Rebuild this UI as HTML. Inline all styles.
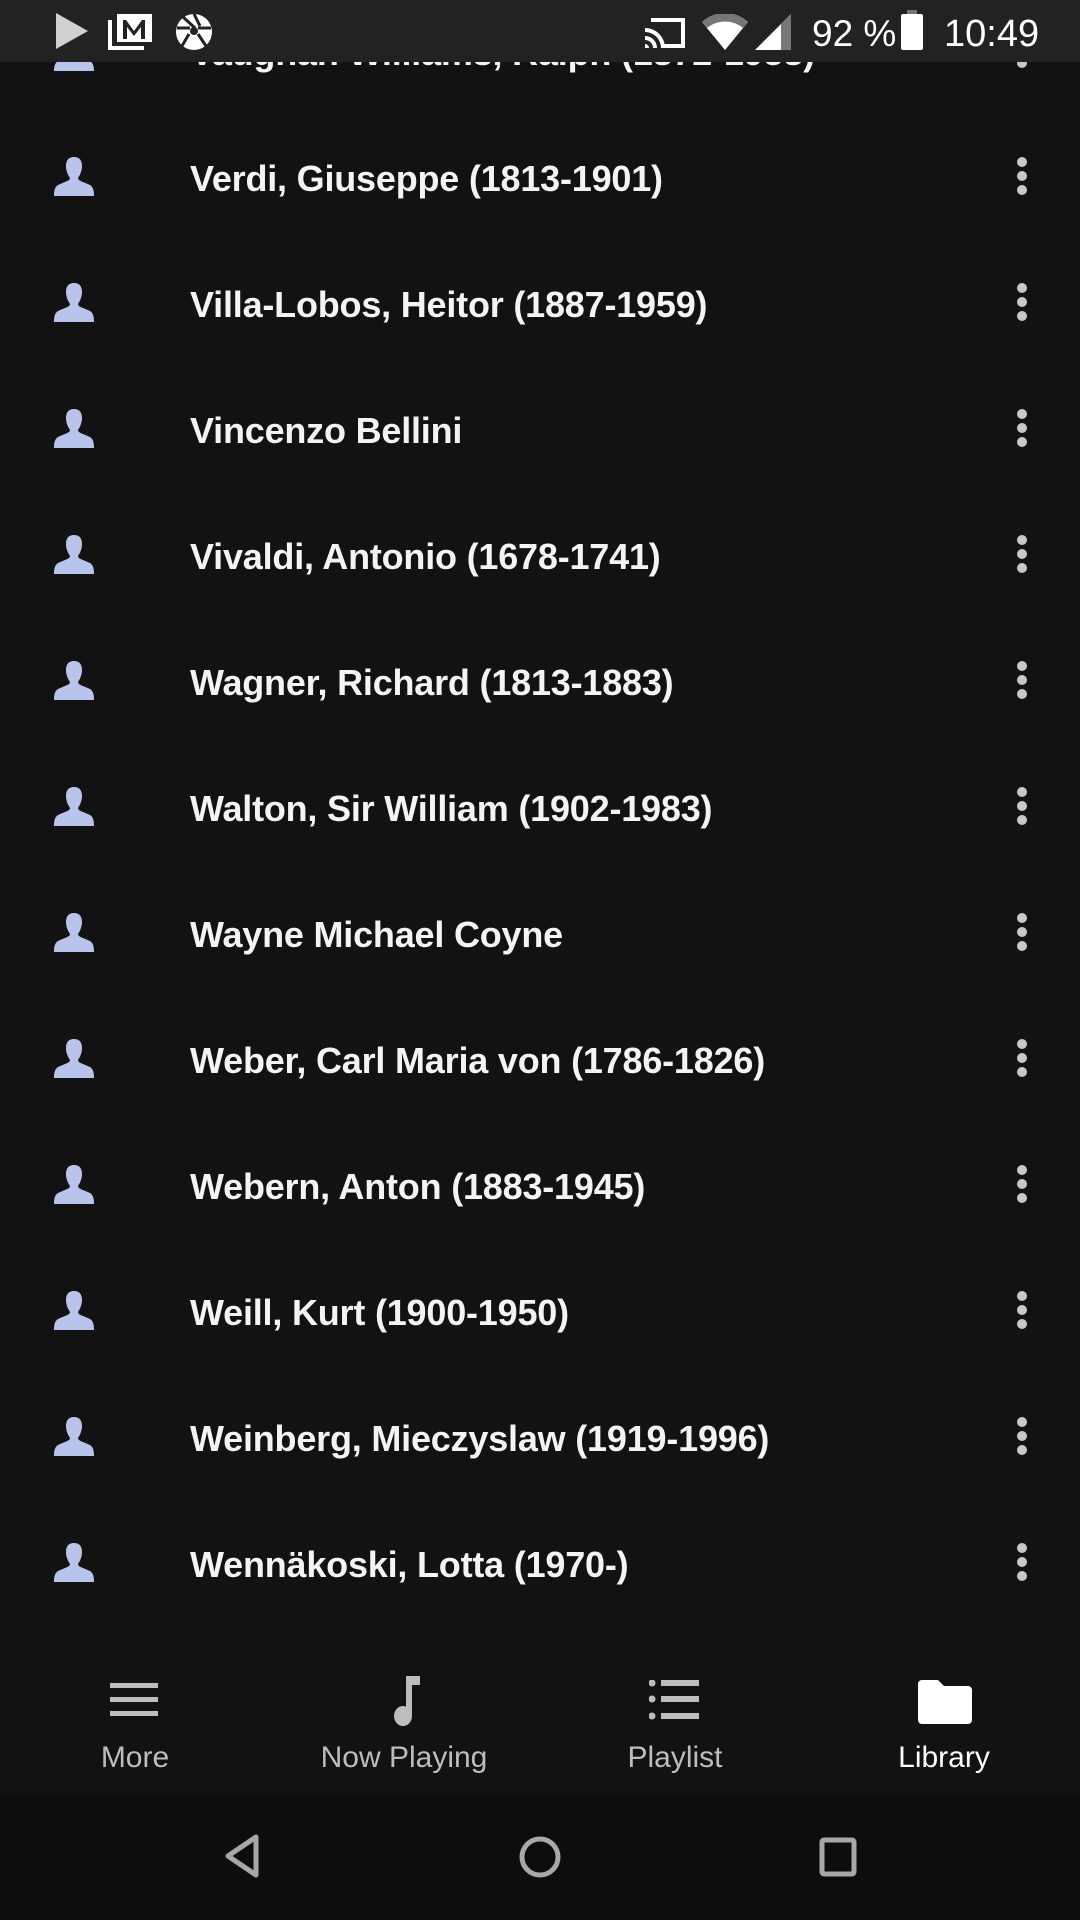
<!DOCTYPE html>
<html><head><meta charset="utf-8"><style>
*{margin:0;padding:0;box-sizing:border-box}
body{width:1080px;height:1920px;background:#121212;overflow:hidden;position:relative;font-family:"Liberation Sans",sans-serif;color:#fff}
.row{position:absolute;left:0;width:1080px;height:126px}
.row .t{position:absolute;left:190px;top:2px;line-height:126px;font-size:36px;font-weight:bold;color:#f4f4f4;white-space:nowrap;letter-spacing:-0.2px}
.row svg.p{position:absolute;left:53px;top:43px}
.row svg.d{position:absolute;left:1012px;top:43px}
.sb{position:absolute;left:0;top:0;width:1080px;height:62px;background:#222;}
.bn{position:absolute;left:0;top:1640px;width:1080px;height:156px;background:#121212}
.tab{position:absolute;top:1741px;font-size:30px;color:#bdbdbd;width:270px;text-align:center}
.sys{position:absolute;left:0;top:1795px;width:1080px;height:125px;background:#0d0d0d}
</style></head><body>

<div class="row" style="top:-12px"><svg class="p" width="42" height="40" viewBox="0 0 42 40"><path d="M21 2c6 0 8 4 8 9 0 5-2 9-4 12 0 3 6 4 12 7 3 2 4 5 4 10H1c0-5 1-8 4-10 6-3 12-4 12-7-2-3-4-7-4-12 0-5 2-9 8-9z" fill="#b8c4ec"/></svg><div class="t">Vaughan Williams, Ralph (1872-1958)</div><svg class="d" width="20" height="40"><circle cx="10" cy="4" r="5" fill="#c8c8c8"/><circle cx="10" cy="18" r="5" fill="#c8c8c8"/><circle cx="10" cy="32" r="5" fill="#c8c8c8"/></svg></div>

<div class="row" style="top:114px"><svg class="p" width="42" height="40" viewBox="0 0 42 40"><path d="M21 0c6 0 8 4 8 9 0 5-2 9-4 12 0 3 6 4 12 7 3 2 4 5 4 11H1c0-6 1-9 4-11 6-3 12-4 12-7-2-3-4-7-4-12 0-5 2-9 8-9z" fill="#b8c4ec"/></svg><div class="t">Verdi, Giuseppe (1813-1901)</div><svg class="d" width="20" height="40"><circle cx="10" cy="5" r="5" fill="#c8c8c8"/><circle cx="10" cy="19" r="5" fill="#c8c8c8"/><circle cx="10" cy="33" r="5" fill="#c8c8c8"/></svg></div>
<div class="row" style="top:240px"><svg class="p" width="42" height="40" viewBox="0 0 42 40"><path d="M21 0c6 0 8 4 8 9 0 5-2 9-4 12 0 3 6 4 12 7 3 2 4 5 4 11H1c0-6 1-9 4-11 6-3 12-4 12-7-2-3-4-7-4-12 0-5 2-9 8-9z" fill="#b8c4ec"/></svg><div class="t">Villa-Lobos, Heitor (1887-1959)</div><svg class="d" width="20" height="40"><circle cx="10" cy="5" r="5" fill="#c8c8c8"/><circle cx="10" cy="19" r="5" fill="#c8c8c8"/><circle cx="10" cy="33" r="5" fill="#c8c8c8"/></svg></div>
<div class="row" style="top:366px"><svg class="p" width="42" height="40" viewBox="0 0 42 40"><path d="M21 0c6 0 8 4 8 9 0 5-2 9-4 12 0 3 6 4 12 7 3 2 4 5 4 11H1c0-6 1-9 4-11 6-3 12-4 12-7-2-3-4-7-4-12 0-5 2-9 8-9z" fill="#b8c4ec"/></svg><div class="t">Vincenzo Bellini</div><svg class="d" width="20" height="40"><circle cx="10" cy="5" r="5" fill="#c8c8c8"/><circle cx="10" cy="19" r="5" fill="#c8c8c8"/><circle cx="10" cy="33" r="5" fill="#c8c8c8"/></svg></div>
<div class="row" style="top:492px"><svg class="p" width="42" height="40" viewBox="0 0 42 40"><path d="M21 0c6 0 8 4 8 9 0 5-2 9-4 12 0 3 6 4 12 7 3 2 4 5 4 11H1c0-6 1-9 4-11 6-3 12-4 12-7-2-3-4-7-4-12 0-5 2-9 8-9z" fill="#b8c4ec"/></svg><div class="t">Vivaldi, Antonio (1678-1741)</div><svg class="d" width="20" height="40"><circle cx="10" cy="5" r="5" fill="#c8c8c8"/><circle cx="10" cy="19" r="5" fill="#c8c8c8"/><circle cx="10" cy="33" r="5" fill="#c8c8c8"/></svg></div>
<div class="row" style="top:618px"><svg class="p" width="42" height="40" viewBox="0 0 42 40"><path d="M21 0c6 0 8 4 8 9 0 5-2 9-4 12 0 3 6 4 12 7 3 2 4 5 4 11H1c0-6 1-9 4-11 6-3 12-4 12-7-2-3-4-7-4-12 0-5 2-9 8-9z" fill="#b8c4ec"/></svg><div class="t">Wagner, Richard (1813-1883)</div><svg class="d" width="20" height="40"><circle cx="10" cy="5" r="5" fill="#c8c8c8"/><circle cx="10" cy="19" r="5" fill="#c8c8c8"/><circle cx="10" cy="33" r="5" fill="#c8c8c8"/></svg></div>
<div class="row" style="top:744px"><svg class="p" width="42" height="40" viewBox="0 0 42 40"><path d="M21 0c6 0 8 4 8 9 0 5-2 9-4 12 0 3 6 4 12 7 3 2 4 5 4 11H1c0-6 1-9 4-11 6-3 12-4 12-7-2-3-4-7-4-12 0-5 2-9 8-9z" fill="#b8c4ec"/></svg><div class="t">Walton, Sir William (1902-1983)</div><svg class="d" width="20" height="40"><circle cx="10" cy="5" r="5" fill="#c8c8c8"/><circle cx="10" cy="19" r="5" fill="#c8c8c8"/><circle cx="10" cy="33" r="5" fill="#c8c8c8"/></svg></div>
<div class="row" style="top:870px"><svg class="p" width="42" height="40" viewBox="0 0 42 40"><path d="M21 0c6 0 8 4 8 9 0 5-2 9-4 12 0 3 6 4 12 7 3 2 4 5 4 11H1c0-6 1-9 4-11 6-3 12-4 12-7-2-3-4-7-4-12 0-5 2-9 8-9z" fill="#b8c4ec"/></svg><div class="t">Wayne Michael Coyne</div><svg class="d" width="20" height="40"><circle cx="10" cy="5" r="5" fill="#c8c8c8"/><circle cx="10" cy="19" r="5" fill="#c8c8c8"/><circle cx="10" cy="33" r="5" fill="#c8c8c8"/></svg></div>
<div class="row" style="top:996px"><svg class="p" width="42" height="40" viewBox="0 0 42 40"><path d="M21 0c6 0 8 4 8 9 0 5-2 9-4 12 0 3 6 4 12 7 3 2 4 5 4 11H1c0-6 1-9 4-11 6-3 12-4 12-7-2-3-4-7-4-12 0-5 2-9 8-9z" fill="#b8c4ec"/></svg><div class="t">Weber, Carl Maria von (1786-1826)</div><svg class="d" width="20" height="40"><circle cx="10" cy="5" r="5" fill="#c8c8c8"/><circle cx="10" cy="19" r="5" fill="#c8c8c8"/><circle cx="10" cy="33" r="5" fill="#c8c8c8"/></svg></div>
<div class="row" style="top:1122px"><svg class="p" width="42" height="40" viewBox="0 0 42 40"><path d="M21 0c6 0 8 4 8 9 0 5-2 9-4 12 0 3 6 4 12 7 3 2 4 5 4 11H1c0-6 1-9 4-11 6-3 12-4 12-7-2-3-4-7-4-12 0-5 2-9 8-9z" fill="#b8c4ec"/></svg><div class="t">Webern, Anton (1883-1945)</div><svg class="d" width="20" height="40"><circle cx="10" cy="5" r="5" fill="#c8c8c8"/><circle cx="10" cy="19" r="5" fill="#c8c8c8"/><circle cx="10" cy="33" r="5" fill="#c8c8c8"/></svg></div>
<div class="row" style="top:1248px"><svg class="p" width="42" height="40" viewBox="0 0 42 40"><path d="M21 0c6 0 8 4 8 9 0 5-2 9-4 12 0 3 6 4 12 7 3 2 4 5 4 11H1c0-6 1-9 4-11 6-3 12-4 12-7-2-3-4-7-4-12 0-5 2-9 8-9z" fill="#b8c4ec"/></svg><div class="t">Weill, Kurt (1900-1950)</div><svg class="d" width="20" height="40"><circle cx="10" cy="5" r="5" fill="#c8c8c8"/><circle cx="10" cy="19" r="5" fill="#c8c8c8"/><circle cx="10" cy="33" r="5" fill="#c8c8c8"/></svg></div>
<div class="row" style="top:1374px"><svg class="p" width="42" height="40" viewBox="0 0 42 40"><path d="M21 0c6 0 8 4 8 9 0 5-2 9-4 12 0 3 6 4 12 7 3 2 4 5 4 11H1c0-6 1-9 4-11 6-3 12-4 12-7-2-3-4-7-4-12 0-5 2-9 8-9z" fill="#b8c4ec"/></svg><div class="t">Weinberg, Mieczyslaw (1919-1996)</div><svg class="d" width="20" height="40"><circle cx="10" cy="5" r="5" fill="#c8c8c8"/><circle cx="10" cy="19" r="5" fill="#c8c8c8"/><circle cx="10" cy="33" r="5" fill="#c8c8c8"/></svg></div>
<div class="row" style="top:1500px"><svg class="p" width="42" height="40" viewBox="0 0 42 40"><path d="M21 0c6 0 8 4 8 9 0 5-2 9-4 12 0 3 6 4 12 7 3 2 4 5 4 11H1c0-6 1-9 4-11 6-3 12-4 12-7-2-3-4-7-4-12 0-5 2-9 8-9z" fill="#b8c4ec"/></svg><div class="t">Wennäkoski, Lotta (1970-)</div><svg class="d" width="20" height="40"><circle cx="10" cy="5" r="5" fill="#c8c8c8"/><circle cx="10" cy="19" r="5" fill="#c8c8c8"/><circle cx="10" cy="33" r="5" fill="#c8c8c8"/></svg></div>

<div class="sb">
<svg style="position:absolute;left:56px;top:13px" width="32" height="36"><path d="M0 0L32 18L0 36Z" fill="#d0d0d0"/></svg>
<svg style="position:absolute;left:108px;top:12px" width="46" height="38" viewBox="0 0 46 38"><path d="M2 8V36H36" fill="none" stroke="#fff" stroke-width="4"/><rect x="9" y="2" width="35" height="28" fill="#fff"/><path d="M15 27V8H18L26 19L34 8H37V27H33V15L26 24L19 15V27Z" fill="#222"/></svg>
<svg style="position:absolute;left:175px;top:14px" width="38" height="36" viewBox="0 0 38 36"><circle cx="19" cy="18" r="18" fill="#fff"/><g stroke="#222" stroke-width="3"><path d="M19 0L25 12M36 14L23 14M31 32L23 20M7 32L14 20M2 14L15 14M8 3L20 14"/></g><circle cx="19" cy="17" r="4" fill="#222"/></svg>
<svg style="position:absolute;left:645px;top:14px" width="42" height="36" viewBox="0 0 42 36"><path d="M6 6V4h34v30H18v-4h18V8H6z" fill="#fff"/><path d="M0 14a20 20 0 0 1 20 20h-4A16 16 0 0 0 0 18zM0 22a12 12 0 0 1 12 12H8a8 8 0 0 0-8-8zM0 30a4 4 0 0 1 4 4H0z" fill="#fff"/></svg>
<svg style="position:absolute;left:702px;top:14px" width="46" height="36" viewBox="0 0 46 36"><path d="M0 8A34 34 0 0 1 46 8L23 36Z" fill="#fff"/><path d="M0 8A34 34 0 0 1 46 8L41 14A28 28 0 0 0 5 14Z" fill="#777"/></svg>
<svg style="position:absolute;left:755px;top:14px" width="36" height="36"><path d="M36 0V36H0Z" fill="#fff"/><path d="M36 0V36H26V10Z" fill="#777"/></svg>
<div style="position:absolute;left:812px;top:11px;font-size:37px;color:#fff;line-height:46px">92 %</div>
<svg style="position:absolute;left:901px;top:10px" width="22" height="40"><rect x="6" y="0" width="10" height="5" fill="#777"/><rect x="0" y="4" width="22" height="36" rx="2" fill="#fff"/></svg>
<div style="position:absolute;left:944px;top:11px;font-size:38px;color:#fff;line-height:46px">10:49</div>
</div>

<div class="bn"></div>
<svg style="position:absolute;left:110px;top:1683px" width="48" height="34"><rect y="0" width="48" height="5" fill="#bdbdbd"/><rect y="14" width="48" height="5" fill="#bdbdbd"/><rect y="28" width="48" height="5" fill="#bdbdbd"/></svg>
<svg style="position:absolute;left:388px;top:1676px" width="34" height="50" viewBox="0 0 34 50"><rect x="18" y="0" width="6" height="40" fill="#bdbdbd"/><rect x="18" y="0" width="14" height="9" fill="#bdbdbd"/><ellipse cx="15" cy="40" rx="9" ry="10" fill="#bdbdbd"/></svg>
<svg style="position:absolute;left:649px;top:1680px" width="50" height="42"><circle cx="3" cy="3" r="3.5" fill="#bdbdbd"/><circle cx="3" cy="19" r="3.5" fill="#bdbdbd"/><circle cx="3" cy="36" r="3.5" fill="#bdbdbd"/><rect x="12" y="0" width="38" height="6" fill="#bdbdbd"/><rect x="12" y="16" width="38" height="6" fill="#bdbdbd"/><rect x="12" y="33" width="38" height="6" fill="#bdbdbd"/></svg>
<svg style="position:absolute;left:918px;top:1680px" width="54" height="44" viewBox="0 0 54 44"><path d="M4 0H20L26 6H50a4 4 0 0 1 4 4V40a4 4 0 0 1-4 4H4a4 4 0 0 1-4-4V4a4 4 0 0 1 4-4Z" fill="#fff"/></svg>
<div class="tab" style="left:0">More</div>
<div class="tab" style="left:269px">Now Playing</div>
<div class="tab" style="left:540px">Playlist</div>
<div class="tab" style="left:809px;color:#fff">Library</div>

<div class="sys">
<svg style="position:absolute;left:222px;top:38px" width="40" height="46"><path d="M34 4L6 23L34 42Z" fill="none" stroke="#a8a8a8" stroke-width="5" stroke-linejoin="round"/></svg>
<svg style="position:absolute;left:518px;top:40px" width="44" height="44"><circle cx="22" cy="22" r="18" fill="none" stroke="#a8a8a8" stroke-width="5"/></svg>
<svg style="position:absolute;left:819px;top:42px" width="38" height="40"><rect x="3" y="3" width="32" height="34" rx="2" fill="none" stroke="#a8a8a8" stroke-width="5"/></svg>
</div>
</body></html>
